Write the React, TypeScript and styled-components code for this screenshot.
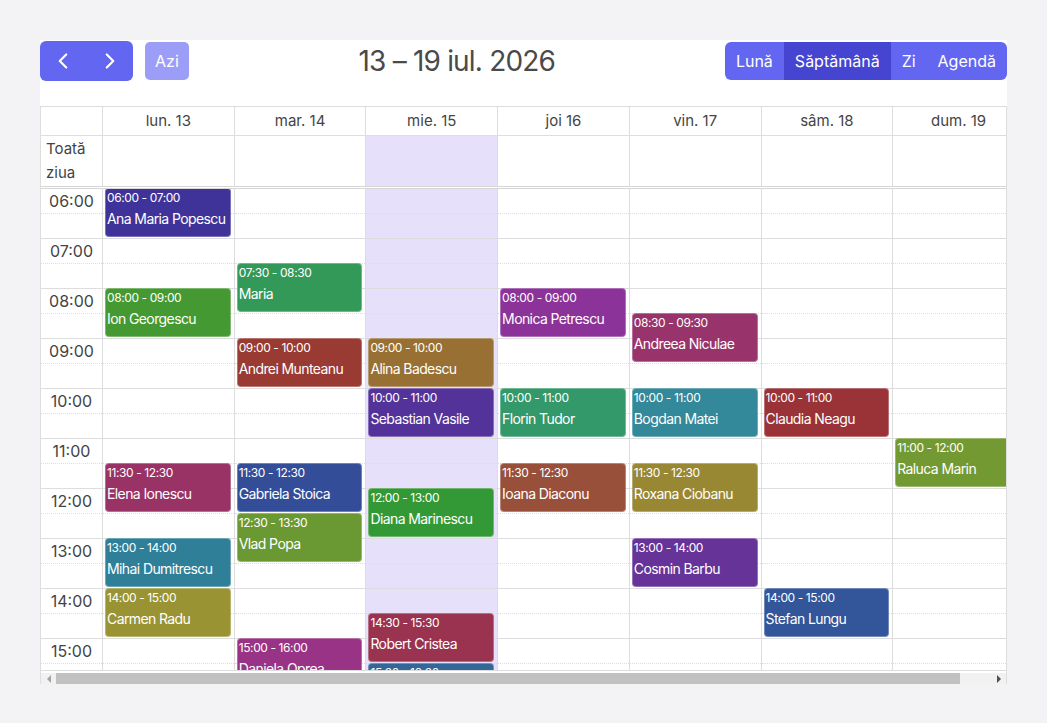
import React from "react";
import styled, { createGlobalStyle } from "styled-components";
import { ChevronLeft, ChevronRight } from "lucide-react";

const GlobalStyle = createGlobalStyle`
  * { box-sizing: border-box; }
  html, body { margin: 0; background: #f3f3f6; }
  body {
    font-family: Inter, "Noto Sans", sans-serif;
    color: #444;
  }
`;

const HOUR_PX = 50;
const FIRST_HOUR = 6;
const LAST_HOUR = 24;
const GUTTER_PX = 61;
const SCROLLBAR_PX = 15;

const Page = styled.div`
  padding: 40px;
`;

const Card = styled.div`
  background: #fff;
`;

const Toolbar = styled.div`
  display: flex;
  align-items: center;
  height: 41px;
  margin-bottom: 25px;
`;

const NavGroup = styled.div`
  display: flex;
  background: #6366f1;
  border-radius: 6px;
  overflow: hidden;
`;

const NavButton = styled.button`
  width: 46.5px;
  height: 40px;
  border: none;
  background: transparent;
  color: #fff;
  display: flex;
  align-items: center;
  justify-content: center;
  padding: 0;
  cursor: pointer;
`;

const TodayButton = styled.button`
  margin-left: 12px;
  height: 38px;
  padding: 0 10px;
  border: none;
  border-radius: 5px;
  background: #9b9df7;
  color: #fff;
  font: 16px Inter, sans-serif;
`;

const Title = styled.div`
  flex: 1;
  text-align: center;
  font-size: 28px;
  letter-spacing: -0.8px;
  color: #4a4a4a;
`;

const ViewGroup = styled.div`
  display: flex;
  height: 38px;
  background: #6366f1;
  border-radius: 6px;
  overflow: hidden;
`;

const ViewButton = styled.button<{ $active?: boolean }>`
  padding: 0 11px;
  border: none;
  background: ${(p) => (p.$active ? "#4545d2" : "transparent")};
  color: #fff;
  font: 16px Inter, sans-serif;
`;

const Frame = styled.div`
  display: flex;
  flex-direction: column;
  height: 578px;
  border: 1px solid #ddd;
  border-bottom: none;
  overflow: hidden;
`;

const Inner = styled.div`
  width: ${GUTTER_PX + 7 * 131.7 + SCROLLBAR_PX}px;
  flex: 1;
  min-height: 0;
  display: flex;
  flex-direction: column;
`;

const HeaderRow = styled.div`
  display: flex;
  flex: none;
  height: 29px;
  padding-right: ${SCROLLBAR_PX}px;
  border-bottom: 1px solid #ddd;
`;

const Gutter = styled.div`
  width: ${GUTTER_PX}px;
  flex: none;
`;

const HeaderCell = styled.div`
  flex: 1;
  border-left: 1px solid #ddd;
  text-align: center;
  font-size: 15px;
  line-height: 28px;
  color: #444;
`;

const AllDayRow = styled.div`
  display: flex;
  flex: none;
  height: 53px;
  padding-right: ${SCROLLBAR_PX}px;
  border-bottom: 3px double #d6d6d6;
`;

const AllDayLabel = styled.div`
  width: ${GUTTER_PX}px;
  flex: none;
  padding: 1px 5px;
  font-size: 15px;
  line-height: 24px;
  color: #444;
`;

const AllDayCell = styled.div<{ $today?: boolean }>`
  flex: 1;
  border-left: 1px solid #ddd;
  background: ${(p) => (p.$today ? "#e6e0fb" : "transparent")};
`;

const TimeContent = styled.div`
  flex: 1;
  min-height: 0;
  display: flex;
  overflow: hidden;
  padding-right: ${SCROLLBAR_PX}px;
  border-bottom: 1px solid #ddd;
`;

const TimeColumn = styled.div`
  width: ${GUTTER_PX}px;
  flex: none;
  height: max-content;
`;

const DayColumn = styled.div<{ $today?: boolean }>`
  flex: 1;
  position: relative;
  height: max-content;
  border-left: 1px solid #ddd;
  background: ${(p) => (p.$today ? "#e6e0fb" : "transparent")};
`;

const HourGroup = styled.div`
  height: ${HOUR_PX}px;
  border-bottom: 1px solid #ddd;
`;

const HalfSlot = styled.div`
  height: 25px;
  border-bottom: 1px dotted #dedede;
  text-align: center;
  font-size: 16px;
  line-height: 24px;
  color: #444;
`;

const Event = styled.div<{ $color: string }>`
  position: absolute;
  left: 2px;
  right: 3px;
  height: 49px;
  padding: 0 1px;
  overflow: hidden;
  border-radius: 4px;
  border: 1px solid rgba(255, 255, 255, 0.3);
  background: ${(p) => p.$color};
  color: #fff;
`;

const EventTime = styled.div`
  font-size: 12px;
  line-height: 18px;
  letter-spacing: -0.4px;
  white-space: nowrap;
`;

const EventTitle = styled.div`
  font-size: 14px;
  line-height: 24px;
  letter-spacing: -0.6px;
`;

/* horizontal scroller under the grid */
const ScrollBar = styled.div`
  display: flex;
  flex: none;
  height: 11px;
  margin-top: 2px;
  background: #f1f1f1;
`;

const ScrollArrow = styled.div<{ $dir: "left" | "right"; $disabled?: boolean }>`
  width: 15px;
  flex: none;
  display: flex;
  align-items: center;
  justify-content: center;

  &::before {
    content: "";
    border-top: 4px solid transparent;
    border-bottom: 4px solid transparent;
    ${(p) =>
      p.$dir === "left"
        ? `border-right: 4px solid ${p.$disabled ? "#a3a3a3" : "#505050"};`
        : `border-left: 4px solid ${p.$disabled ? "#a3a3a3" : "#505050"};`}
  }
`;

const ScrollTrack = styled.div`
  flex: 1;
  display: flex;
`;

const ScrollThumb = styled.div`
  background: #c1c1c1;
  height: 100%;
`;

type CalEvent = {
  day: number;
  start: string;
  end: string;
  title: string;
  color: string;
};

const days = ["lun. 13", "mar. 14", "mie. 15", "joi 16", "vin. 17", "sâm. 18", "dum. 19"];
const TODAY = 2;

const events: CalEvent[] = [
  { day: 0, start: "06:00", end: "07:00", title: "Ana Maria Popescu", color: "#3f3399" },
  { day: 0, start: "08:00", end: "09:00", title: "Ion Georgescu", color: "#459933" },
  { day: 0, start: "11:30", end: "12:30", title: "Elena Ionescu", color: "#993366" },
  { day: 0, start: "13:00", end: "14:00", title: "Mihai Dumitrescu", color: "#2f7f99" },
  { day: 0, start: "14:00", end: "15:00", title: "Carmen Radu", color: "#999333" },
  { day: 1, start: "07:30", end: "08:30", title: "Maria Constantinescu", color: "#339959" },
  { day: 1, start: "09:00", end: "10:00", title: "Andrei Munteanu", color: "#993a33" },
  { day: 1, start: "11:30", end: "12:30", title: "Gabriela Stoica", color: "#334d99" },
  { day: 1, start: "12:30", end: "13:30", title: "Vlad Popa", color: "#6a9933" },
  { day: 1, start: "15:00", end: "16:00", title: "Daniela Oprea", color: "#993385" },
  { day: 2, start: "09:00", end: "10:00", title: "Alina Badescu", color: "#997033" },
  { day: 2, start: "10:00", end: "11:00", title: "Sebastian Vasile", color: "#533399" },
  { day: 2, start: "12:00", end: "13:00", title: "Diana Marinescu", color: "#339936" },
  { day: 2, start: "14:30", end: "15:30", title: "Robert Cristea", color: "#993350" },
  { day: 2, start: "15:30", end: "16:30", title: "Cristina Dobre", color: "#336699" },
  { day: 3, start: "08:00", end: "09:00", title: "Monica Petrescu", color: "#8c3399" },
  { day: 3, start: "10:00", end: "11:00", title: "Florin Tudor", color: "#33996b" },
  { day: 3, start: "11:30", end: "12:30", title: "Ioana Diaconu", color: "#99503a" },
  { day: 4, start: "08:30", end: "09:30", title: "Andreea Niculae", color: "#99336b" },
  { day: 4, start: "10:00", end: "11:00", title: "Bogdan Matei", color: "#338899" },
  { day: 4, start: "11:30", end: "12:30", title: "Roxana Ciobanu", color: "#998833" },
  { day: 4, start: "13:00", end: "14:00", title: "Cosmin Barbu", color: "#663399" },
  { day: 5, start: "10:00", end: "11:00", title: "Claudia Neagu", color: "#993338" },
  { day: 5, start: "14:00", end: "15:00", title: "Stefan Lungu", color: "#335599" },
  { day: 6, start: "11:00", end: "12:00", title: "Raluca Marin", color: "#739933" },
];

const hours = Array.from({ length: LAST_HOUR - FIRST_HOUR }, (_, i) => FIRST_HOUR + i);

// time of day -> px from the top of the day column
const topOf = (t: string) => {
  const [h, m] = t.split(":").map(Number);
  return ((h - FIRST_HOUR) * 60 + m) / 60 * HOUR_PX - 1;
};

const pad = (n: number) => String(n).padStart(2, "0");

function HourLines({ labels }: { labels?: boolean }) {
  return (
    <>
      {hours.map((h) => (
        <HourGroup key={h}>
          <HalfSlot>{labels ? `${pad(h)}:00` : null}</HalfSlot>
        </HourGroup>
      ))}
    </>
  );
}

export default function App() {
  // share of the grid width that fits in the frame
  const visible = 965 / (GUTTER_PX + 7 * 131.7 + SCROLLBAR_PX);

  return (
    <Page>
      <GlobalStyle />
      <Card>
        <Toolbar>
          <NavGroup>
            <NavButton aria-label="Înapoi">
              <ChevronLeft size={26} strokeWidth={2} />
            </NavButton>
            <NavButton aria-label="Înainte">
              <ChevronRight size={26} strokeWidth={2} />
            </NavButton>
          </NavGroup>
          <TodayButton>Azi</TodayButton>
          <Title>13 – 19 iul. 2026</Title>
          <ViewGroup>
            <ViewButton>Lună</ViewButton>
            <ViewButton $active>Săptămână</ViewButton>
            <ViewButton>Zi</ViewButton>
            <ViewButton>Agendă</ViewButton>
          </ViewGroup>
        </Toolbar>

        <Frame>
          <Inner>
            <HeaderRow>
              <Gutter />
              {days.map((d) => (
                <HeaderCell key={d}>{d}</HeaderCell>
              ))}
            </HeaderRow>

            <AllDayRow>
              <AllDayLabel>Toată ziua</AllDayLabel>
              {days.map((d, i) => (
                <AllDayCell key={d} $today={i === TODAY} />
              ))}
            </AllDayRow>

            <TimeContent>
              <TimeColumn>
                <HourLines labels />
              </TimeColumn>
              {days.map((d, i) => (
                <DayColumn key={d} $today={i === TODAY}>
                  <HourLines />
                  {events
                    .filter((e) => e.day === i)
                    .map((e) => (
                      <Event key={e.title} $color={e.color} style={{ top: topOf(e.start) }}>
                        <EventTime>
                          {e.start} - {e.end}
                        </EventTime>
                        <EventTitle>{e.title}</EventTitle>
                      </Event>
                    ))}
                </DayColumn>
              ))}
            </TimeContent>
          </Inner>

          <ScrollBar>
            <ScrollArrow $dir="left" $disabled />
            <ScrollTrack>
              <ScrollThumb style={{ width: `${visible * 100}%` }} />
            </ScrollTrack>
            <ScrollArrow $dir="right" />
          </ScrollBar>
        </Frame>
      </Card>
    </Page>
  );
}
